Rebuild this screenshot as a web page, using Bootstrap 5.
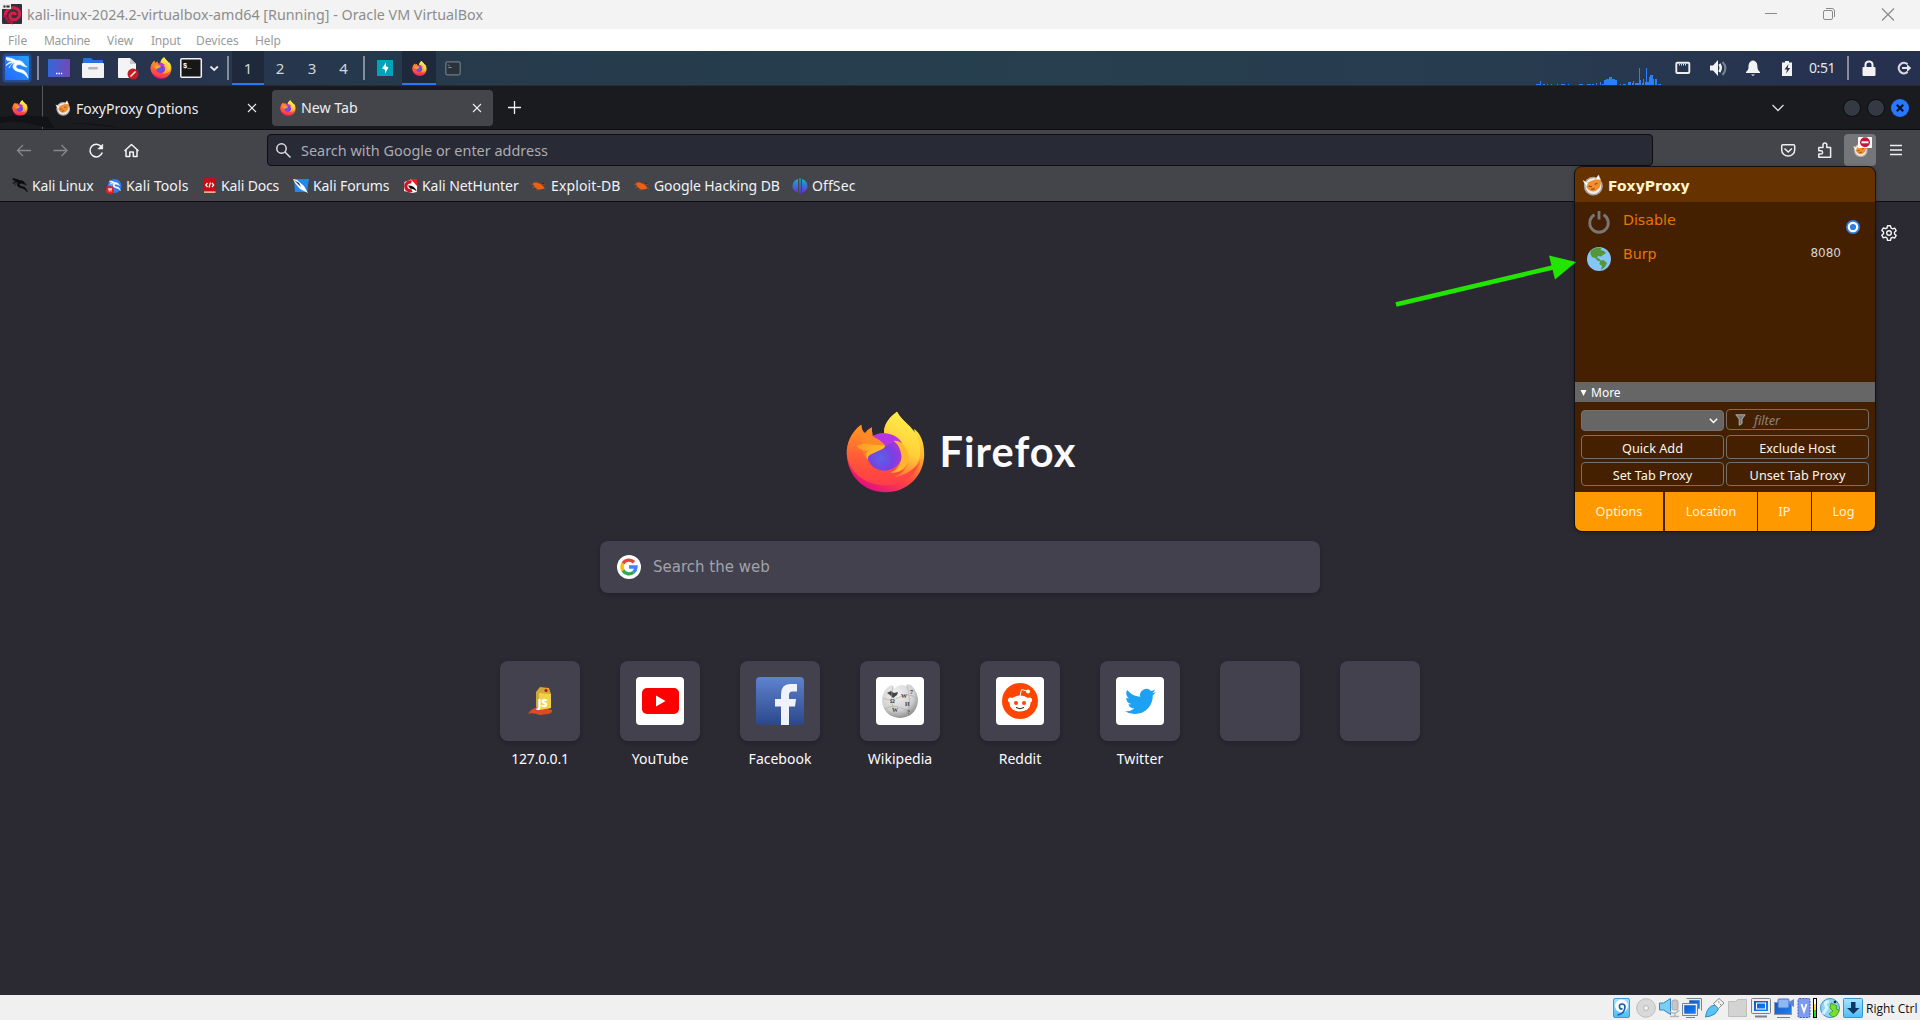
<!DOCTYPE html>
<html lang="en">
<head>
<meta charset="utf-8">
<title>kali-linux - Oracle VM VirtualBox</title>
<link rel="stylesheet" href="https://cdn.jsdelivr.net/npm/bootstrap@5.3.0/dist/css/bootstrap.min.css">
<style>
body{width:1920px;height:1020px;overflow:hidden;background:#2b2a33;font-family:"Noto Sans",sans-serif;font-size:14px;line-height:1;color:#fbfbfe}
svg{display:block;flex:none}
.cell{display:flex;align-items:center;flex:none;white-space:nowrap}
.titlebar{height:29px;background:#f3f3f3;color:#8d8d8d;font-size:14.3px}
.titlebar .cell{padding-top:1px}
.vmmenu{height:22px;background:#fff;color:#9a9a9a;font-size:12px;padding:2px 0 0 8px}
.panel{height:35px;background:linear-gradient(90deg,#27324f 0,#263a4c 450px,#263f4e 960px,#283c4f 1500px,#26314f 1850px);border-bottom:1px solid #2a2b31}
.vsep{width:2px;height:24px;background:#868d99;flex:none}
.ws{width:32px;height:34px;color:#d3d6dd;font-size:15px;justify-content:center}
.on{background:#1e2a3b;border-bottom:2px solid #2777ff;padding-top:2px}
.tabbar{height:44px;background:#1a1b1f;border-bottom:1px solid #0d0e11}
.pinned{width:43px;height:43px;border-right:1px solid #56575b;padding-left:12px}
.tabx{height:36px;border-radius:4px;color:#ececef}
.tabx.sel{background:#43454b;width:221px;margin-left:8px}
.tabx span{padding:2px 0 0 5px}
.navbarx{height:40px;background:#43454b}
.urlbar{width:1386px;height:32px;background:#282a36;border:1px solid #0e0f13;border-radius:4px;color:#abacb2;font-size:14.45px;box-sizing:border-box}
.urlbar span{padding-top:2px}
.bookmarks{height:32px;background:#43454b;border-bottom:1px solid #0e0f13;color:#f2f2f4;font-size:14px}
.foxbtn{width:32px;height:32px;background:#75767a;border-radius:4px;justify-content:center}
.newtab{height:793px;background:#2b2a33}
.word{font:700 41.5px/1 Lato,sans-serif;letter-spacing:1.050px}
.searchbox{width:720px;height:52px;border-radius:8px;background:#42414d;box-shadow:0 2px 5px rgba(0,0,0,.2);color:#a3a2aa;font:15px "DejaVu Sans",sans-serif;padding-left:17px}
.tile{width:80px;height:80px;border-radius:8px;background:#42414d;box-shadow:0 2px 5px rgba(0,0,0,.2)}
.tilebox{width:120px}
.tilename{padding-top:11px}
.pic{border-radius:4px;overflow:hidden}
.statusbar{height:25px;background:#f0f0f0;color:#111;font:12px "Open Sans",sans-serif}
.popupx{position:absolute;left:1574px;top:166px;width:302px;height:366px;border:1px solid #111216;border-radius:8px;background:#442000;overflow:hidden;box-shadow:0 1px 4px rgba(0,0,0,.3)}
.pophead{height:35px;background:#630;color:#fff3c9;font:bold 14px "DejaVu Sans",sans-serif}
.prox{font:14.2px "DejaVu Sans",sans-serif;color:#e77600;height:34px}
.morebar{height:20px;background:#666;font-size:12px;color:#fff}
.pbtn{border:1px solid #757070;border-radius:4px;height:24px;width:143px;font-size:12.7px;color:#fbf5ee;justify-content:center;padding-top:2px}
.foot{height:39px;font-size:12.6px;color:#fff3dd}
.foot>div{background:#f90;height:39px;justify-content:center;padding-top:2px}
.arrowx{position:absolute;left:1390px;top:250px}
.gear{position:absolute;left:1881px;top:225px}
</style>
<script src="https://cdn.jsdelivr.net/npm/bootstrap@5.3.0/dist/js/bootstrap.bundle.min.js"></script>
</head>
<body>
<svg width="0" height="0" class="position-absolute">
<defs>
<linearGradient id="fa" x1=".85" y1=".1" x2=".3" y2="1"><stop offset="0" stop-color="#fff04a"/><stop offset=".3" stop-color="#ffb52a"/><stop offset=".6" stop-color="#ff5038"/><stop offset="1" stop-color="#e40c80"/></linearGradient>
<linearGradient id="fb" x1="0" y1="0" x2="0" y2="1"><stop offset="0" stop-color="#ff9a1e"/><stop offset=".55" stop-color="#ff5a38"/><stop offset="1" stop-color="#ff3b47"/></linearGradient>
<linearGradient id="fc" x1=".6" y1="0" x2=".3" y2="1"><stop offset="0" stop-color="#fff14d"/><stop offset=".55" stop-color="#ffcf38"/><stop offset="1" stop-color="#ff6a33"/></linearGradient>
<radialGradient id="fd" cx=".4" cy=".65" r=".7"><stop offset="0" stop-color="#5a63e8"/><stop offset=".5" stop-color="#7a3fe0"/><stop offset="1" stop-color="#b833e1"/></radialGradient>
<linearGradient id="fe" x1="0" y1="0" x2="1" y2=".4"><stop offset="0" stop-color="#ff9620"/><stop offset="1" stop-color="#ffc02f"/></linearGradient>
<linearGradient id="kb" x1="0" y1="1" x2="1" y2="0"><stop offset="0" stop-color="#2468ff"/><stop offset="1" stop-color="#27a0ff"/></linearGradient>
<linearGradient id="dk" x1="0" x2="1"><stop offset="0" stop-color="#3268da"/><stop offset="1" stop-color="#7448b8"/></linearGradient>
<linearGradient id="fbk" x1="0" y1="0" x2="0" y2="1"><stop offset="0" stop-color="#5f83cf"/><stop offset="1" stop-color="#2b478a"/></linearGradient>
<linearGradient id="off" x1="0" y1="0" x2="0" y2="1"><stop offset="0" stop-color="#10b3c6"/><stop offset="1" stop-color="#6a2be0"/></linearGradient>
<linearGradient id="scr" x1="0" y1="0" x2="1" y2="1"><stop offset="0" stop-color="#0a55c4"/><stop offset="1" stop-color="#1f86f2"/></linearGradient>
<linearGradient id="sky" x1="0" y1="0" x2="0" y2="1"><stop offset="0" stop-color="#a6e4ff"/><stop offset="1" stop-color="#4dbcf5"/></linearGradient>
<radialGradient id="glb" cx=".4" cy=".3" r=".8"><stop offset="0" stop-color="#f4f4f4"/><stop offset=".6" stop-color="#d0d0d0"/><stop offset="1" stop-color="#777"/></radialGradient>
</defs>
<symbol id="firefox" viewBox="15 16 242 250">
<path d="M62 58C30 82 17 115 18 148C20 215 72 264 136 264C202 264 254 214 254 148C254 110 243 85 223 70L226 88C210 58 186 45 171 18C138 42 130 66 132 84L96 92L94 66C86 70 78 77 74 84C67 80 62 70 62 58Z" fill="url(#fa)"/>
<path d="M62 58C30 82 17 115 18 148C24 205 75 240 130 243C185 244 232 215 244 160C235 195 200 205 165 200L96 185L82 150L96 92L94 66C86 70 78 77 74 84C67 80 62 70 62 58Z" fill="url(#fb)"/>
<path d="M171 18C138 42 128 68 133 88C165 92 200 120 204 160C206 185 190 208 160 218C215 212 240 175 242 145C243 115 232 90 223 78C208 55 184 44 171 18Z" fill="url(#fc)"/>
<circle cx="133" cy="143" r="55" fill="url(#fd)"/>
<path d="M96 94C110 82 128 80 148 86C170 92 184 105 187 117C178 108 168 106 160 107C150 130 110 130 96 94Z" fill="#b636e2"/>
<path d="M160 107C180 104 200 122 206 150C210 182 186 206 152 204C176 194 188 170 184 148C180 128 172 116 160 107Z" fill="#ffb52d"/>
<path d="M74 84C80 76 88 69 94 66L96 92C106 99 126 106 135 122C116 126 100 120 70 122C58 108 64 92 74 84Z" fill="#ff8927"/>
<path d="M70 120L84 137C77 142 76 152 83 165C74 158 66 146 66 130Z" fill="#ff7b2c"/>
<path d="M48 123C65 114 82 115 96 119L135 121C134 132 118 135 108 140C92 148 80 150 83 165C73 150 77 140 84 137C70 139 55 134 48 123Z" fill="url(#fe)"/>
</symbol>
<symbol id="foxy" viewBox="0 0 20 20">
<circle cx="10.300" cy="11" r="8.600" fill="#a9adb2"/><circle cx="10.300" cy="11" r="7.600" fill="#f4ece4" stroke="#9a8f86" stroke-width=".6"/>
<path d="M1 6L5 8Q9 6 12.500 5L15 1L17 5Q17.500 11 15 13.500Q11.500 17 8 15.500Q4.500 14 4 11Z" fill="#f08f30"/>
<path d="M1 6L5.500 8.200L4 11.500ZM12.500 4.800L15 .8L16.800 5.200Z" fill="#fff" stroke="#c9c9c9" stroke-width=".4"/>
<path d="M6 11l3 .6M11.500 9.300l2.500-.6M8.500 14l3-.6" stroke="#8d4410" stroke-width="1"/>
</symbol>
<symbol id="dragon" viewBox="0 0 24 24">
<path d="M1 1.500C6 2 9 3 11 4.500C15 4 18 5.500 19.500 9L22 11L18 10C16 8.500 13.500 8 12 9C9.500 11 12 13 15 13.500C19 14 22 16 23 22C20 17.500 17 16.500 13 15.500C7 14 6.500 9 10.500 6.800C7 6 4 7.500 1 9.500C3 6.500 5 5.500 8 5.200C6 4 3.500 3.500 1 3.500" fill="currentColor" stroke="currentColor" stroke-width=".6"/>
<path d="M2 4.500C5 4 7 4.500 9 5.500M4 12C6 8 8 7 10 6.500" stroke="currentColor" fill="none" stroke-width=".9"/>
</symbol>
<symbol id="bug" viewBox="0 0 16 10"><path d="M2 1.500L6 1.200L8 2L10 2.500L13 5L14 8L11 8.500L8 9L5 7L3 5Z" fill="#ee5f12"/><path d="M0 3L4 4M1 7L5 5.500M5 0L7 2M11 1.500L12 3.500L15.500 3M13 6L16 8.500M7 8L6 10" stroke="#ee5f12" stroke-width=".7" opacity=".7"/></symbol>
<symbol id="xx" viewBox="0 0 10 10"><path d="M1 1l8 8M9 1l-8 8" stroke="currentColor" stroke-width="1.100"/></symbol>
</svg>

<header class="titlebar d-flex align-items-center">
<svg width="27" height="29" viewBox="0 0 27 29"><rect x="2" y="4" width="20" height="20" rx="1" fill="#30323b"/><path d="M5 17C5 10 10 7 15 8C20 9 21 15 18 18C15 21 10 20 10 16C10 12.500 15 12 15.500 15" fill="none" stroke="#d81f49" stroke-width="3"/><path d="M5.500 15C5.500 19 9 22.500 13 23" fill="none" stroke="#a8173c" stroke-width="3"/><path d="M2 4h9v5H2z" fill="#e9e9e9"/><path d="M3.500 6.500h2M6.500 6.500h3" stroke="#222" stroke-width="1.800"/></svg>
<div class="cell">kali-linux-2024.2-virtualbox-amd64 [Running] - Oracle VM VirtualBox</div>
<svg class="ms-auto" width="155" height="29" viewBox="1765 0 155 29" fill="none" stroke="#8a8a8a"><path d="M1765 13.500h12"/><rect x="1823.500" y="10.500" width="9" height="9" rx="1.500"/><path d="M1826 8.500h6q2.500 0 2.500 2.500v6"/><path d="M1882 8.500l12 12M1894 8.500l-12 12" stroke-width="1.200"/></svg>
</header>

<nav class="vmmenu d-flex align-items-center">
<div class="cell" style="width:36px">File</div><div class="cell" style="width:63px;letter-spacing:-.3px">Machine</div><div class="cell" style="width:44px">View</div><div class="cell" style="width:45px;letter-spacing:-.2px">Input</div><div class="cell" style="width:59px">Devices</div><div class="cell" style="letter-spacing:-.1px">Help</div>
</nav>

<div class="panel d-flex align-items-center">
<div class="cell" style="width:37px"><svg width="37" height="34" viewBox="0 0 37 34"><rect x="2.500" y="2.500" width="29" height="29" rx="4" fill="#2878ff" opacity=".35"/><rect x="5" y="5" width="24" height="24" rx="1.500" fill="url(#kb)"/><svg x="5" y="5" width="24" height="24" color="#fff"><use href="#dragon"/></svg></svg></div>
<div class="vsep"></div>
<div class="cell" style="width:188px"><svg width="188" height="34" viewBox="39 51 188 34">
<rect x="48" y="59" width="22" height="18" rx="1" fill="url(#dk)"/><path d="M56 73.500h1.500M58.500 73.500h1.500M61 73.500h1.200" stroke="#fff" stroke-width="1.300"/>
<path d="M83 59q0-1 1-1h7l2 2h9q1 0 1 1v3H83z" fill="#2c6fe0"/><rect x="82" y="63" width="22" height="15" rx="1" fill="#f3f3f3"/><rect x="88" y="67" width="10" height="2.500" rx="1.200" fill="#b6b6b6"/>
<path d="M119 58h11l6 6v14h-17q-1 0-1-1V59q0-1 1-1z" fill="#f4f4f4"/><path d="M130 58l6 6h-6z" fill="#c9c9c9"/><circle cx="133" cy="74" r="5.500" fill="#cc1a22"/><path d="M130.500 76.500l5-5" stroke="#fff" stroke-width="1.500"/>
<svg x="150" y="57" width="22" height="22"><use href="#firefox"/></svg>
<rect x="180.800" y="58.800" width="20.500" height="18.500" rx="1" fill="#171717" stroke="#f1f1f1" stroke-width="1.500"/><text x="183" y="68" font-family="Liberation Mono,monospace" font-size="7" font-weight="700" fill="#fff">$_</text>
<path d="M210.500 66.500l3.700 3.500 3.700-3.500" fill="none" stroke="#e6e8ec" stroke-width="1.800"/></svg></div>
<div class="vsep"></div>
<div class="cell ws on" style="margin-left:3px">1</div><div class="cell ws">2</div><div class="cell ws">3</div><div class="cell ws" style="width:35px;padding-right:4px">4</div>
<div class="vsep"></div>
<div class="cell" style="width:37px;padding-left:12px"><svg width="16" height="16" viewBox="0 0 16 16"><path d="M0 0h16v16H0z" fill="#01a3b8"/><path d="M9 2.500V6.300L11.500 7.500L8 13.500V9.700L5 8.500Z" fill="#fff"/></svg></div>
<div class="cell on justify-content-center" style="width:34px;height:34px"><svg width="15" height="15"><use href="#firefox"/></svg></div>
<div class="cell" style="padding-left:9px"><svg width="16" height="15" viewBox="0 0 16 15"><rect x=".8" y=".8" width="14.400" height="13" rx="1.500" fill="#2a333c" stroke="#6f7a83" stroke-width="1.200"/><path d="M3 3.500l1.500 1.500M3.500 6.500h3" stroke="#8d959c"/></svg></div>
<svg class="ms-auto" width="138" height="34" viewBox="1535 51 138 34" shape-rendering="crispEdges"><path fill="#2a7fff" d="M1536 84h5v1h-5zM1540 81h1v4h-1zM1543 84h2v1h-2zM1547 84h1v1h-1zM1551 84h1v1h-1zM1557 84h1v1h-1zM1561 84h4v1h-4zM1568 84h1v1h-1zM1579 84h4v1h-4zM1587 84h4v1h-4zM1592 84h2v1h-2zM1596 83h1v2h-1zM1600 82h1v3h-1zM1602 84h2v1h-2zM1604 80h2v5h-2zM1606 79h3v6h-3zM1609 77h3v8h-3zM1612 79h3v6h-3zM1615 80h2v5h-2zM1620 84h1v1h-1zM1623 84h3v1h-3zM1628 82h3v3h-3zM1632 83h1v2h-1zM1633 81h1v4h-1zM1635 83h4v2h-4zM1639 68h1v17h-1zM1640 80h1v5h-1zM1642 83h2v2h-2zM1643 79h1v6h-1zM1646 68h1v17h-1zM1645 82h4v3h-4zM1649 77h1v8h-1zM1650 75h3v10h-3zM1653 79h1v6h-1zM1655 79h2v6h-2zM1658 84h3v1h-3z"/></svg>
<div class="cell" style="width:135px"><svg width="135" height="34" viewBox="1673 51 135 34"><rect x="1676.300" y="62.800" width="13" height="10.200" rx="1" fill="none" stroke="#eee" stroke-width="1.900"/><path d="M1679.500 64v1.500M1681.500 64v1.500M1683.500 64v1.500M1685.500 64v1.500" stroke="#eee" stroke-width=".9"/>
<path d="M1710 65.500h3l5-5.500v16l-5-5.500h-3z" fill="#f2f2f2"/><path d="M1719.500 64q2.500 4-.2 8" stroke="#f2f2f2" stroke-width="2.500" fill="none"/><path d="M1722.500 62q6 6 0 13" stroke="#7c8492" stroke-width="2" fill="none"/>
<path d="M1753 60.500c-4 .5-4.500 4-4.500 7 0 2-1 3-2.500 4.500v1h14v-1c-1.500-1.500-2.500-2.500-2.500-4.500 0-3-.5-6.500-4.500-7z" fill="#f2f2f2"/><path d="M1751 74.500h4l-2 1.500z" fill="#f2f2f2"/>
<path d="M1785 61h4v1.500h3V76h-10V62.500h3z" fill="#f2f2f2"/><path d="M1788.500 64l-4 5.500h2.500l-.8 4 4-5.500h-2.500z" fill="#26314f"/></svg></div>
<div class="cell" style="width:40px;font-size:14px;letter-spacing:-.4px;color:#e3e6ee;padding-left:1px">0:51</div><div class="vsep" style="margin-left:-1px"></div>
<svg width="71" height="34" viewBox="1849 51 71 34"><rect x="1862.500" y="67" width="13" height="9" rx="1" fill="#f2f2f2"/><path d="M1865.500 68v-3.500a3.500 3 0 0 1 7 0V68" fill="none" stroke="#f2f2f2" stroke-width="2"/><path d="M1907.500 64.300a5.200 5.200 0 1 0 0 7.600" fill="none" stroke="#d9dade" stroke-width="2.200"/><path d="M1902 67h5v-2.800l4.200 3.900-4.200 3.900V69h-5z" fill="#e5e6ea"/></svg>
</div>

<div class="tabbar d-flex align-items-center position-relative">
<svg class="position-absolute start-0 bottom-0" width="130" height="14" viewBox="0 0 130 14"><path d="M0 2Q25-1 48 2L54 13H46Q20 4 0 8ZM70 8Q100 8 122 13Q95 10 70 8Z" fill="#121316"/></svg>
<div class="cell pinned"><svg width="16" height="16"><use href="#firefox"/></svg></div>
<div class="cell tabx" style="width:221px;padding-left:12px"><svg width="16" height="16"><use href="#foxy"/></svg><span style="width:176px">FoxyProxy Options</span><svg width="10" height="10"><use href="#xx"/></svg></div>
<div class="cell tabx sel" style="padding-left:8px"><svg width="16" height="16"><use href="#firefox"/></svg><span style="width:176px;font-size:14.200px">New Tab</span><svg width="10" height="10"><use href="#xx"/></svg></div>
<svg style="margin-left:15px" width="13" height="13" viewBox="0 0 13 13"><path d="M6.500 0v13M0 6.500h13" stroke="#f0f0f0" stroke-width="1.300"/></svg>
<svg class="ms-auto" width="150" height="43" viewBox="1770 86 150 43"><path d="M1772.500 105l5.500 5.500 5.500-5.500" fill="none" stroke="#ddd" stroke-width="1.300"/><g fill="#343944" stroke="#0b0c0f"><circle cx="1852" cy="108" r="8.500"/><circle cx="1876" cy="108" r="8.500"/></g><circle cx="1900" cy="108" r="9" fill="#2777ff"/><path d="M1896.800 104.800l6.400 6.400M1903.200 104.800l-6.400 6.400" stroke="#08122a" stroke-width="2.200"/></svg>
</div>

<div class="navbarx d-flex align-items-center">
<svg width="267" height="40" viewBox="0 130 267 40" fill="none" stroke="#f4f4f5" stroke-width="1.500"><g stroke="#87888c" stroke-width="1.300"><path d="M17.500 150.500H31M23 145l-5.500 5.500 5.500 5.500M53.500 150.500H67M61.500 145l5.500 5.500-5.500 5.500"/></g><path d="M101.500 147a6.300 6.300 0 1 0 .8 5.500"/><path d="M102.800 144v5h-5z" fill="#f4f4f5" stroke-width=".5"/><path d="M124.500 151l7-6.500 7 6.500M126 150v6.500h3.800v-4.500h3.500v4.500h3.700V150" stroke-linejoin="round"/></svg>
<div class="cell urlbar"><svg width="33" height="20" viewBox="0 0 33 20" fill="none" stroke="#e0e0e4" stroke-width="1.500"><circle cx="13.500" cy="8.500" r="4.700"/><path d="M17 12l5.500 5.500"/></svg><span>Search with Google or enter address</span></div>
<svg class="ms-auto" width="191" height="40" viewBox="1653 130 191 40" fill="none" stroke="#eeeef0" stroke-width="1.500"><path d="M1783 144.800h10.500q1.200 0 1.200 1.200v4a6.500 6 0 0 1-13 0v-4q0-1.200 1.300-1.200zM1784.500 148.500l3.700 3.500 3.700-3.500"/><path d="M1818.800 147.500h4.200v-2.700a1.900 1.900 0 0 1 3.800 0v2.700h3.800v9.800h-11.800v-3.300h2.200a1.600 1.600 0 0 0 0-3.200h-2.200z" stroke-linejoin="round"/></svg>
<div class="cell foxbtn"><svg width="32" height="32" viewBox="0 0 32 32"><svg x="8.500" y="7.500" width="16" height="16"><use href="#foxy"/></svg><rect x="14" y="3" width="14" height="11" rx="1" fill="#fff"/><circle cx="21" cy="8.300" r="5" fill="#c8153a"/><path d="M17.500 8.300h7" stroke="#fff" stroke-width="2"/></svg></div>
<svg width="44" height="40" viewBox="1876 130 44 40"><path d="M1890 145.500h12M1890 150h12M1890 154.500h12" stroke="#f0f0f2" stroke-width="1.300"/></svg>
</div>

<div class="bookmarks d-flex align-items-center">
<div class="cell" style="width:106px;padding-left:12px;letter-spacing:-.15px"><svg width="20" height="18" viewBox="0 0 20 18" color="#08090b"><svg width="16" height="17"><use href="#dragon"/></svg></svg>Kali Linux</div>
<div class="cell" style="width:97px;letter-spacing:.1px"><svg width="20" height="16" viewBox="0 0 20 16"><circle cx="8.500" cy="8" r="7" fill="#2e7cf0"/><svg x="3" y="2" width="12" height="12" color="#fff"><use href="#dragon"/></svg><circle cx="4" cy="12" r="4" fill="#e12127"/><path d="M2 11h4M3.200 10.500v3M5 10.500v3" stroke="#fff" stroke-width=".9"/></svg>Kali Tools</div>
<div class="cell" style="width:90px;letter-spacing:-.15px"><svg width="18" height="16" viewBox="0 0 18 16"><rect x=".5" width="12" height="16" rx="1" fill="#c50f14"/><path d="M1 13.500h11.500v1.200H1z" fill="#eee"/><path d="M4.500 5L2.800 7l1.700 2M9 5l1.700 2L9 9M7.500 4.500l-1.500 5" stroke="#fff" fill="none" stroke-width="1.200"/></svg>Kali Docs</div>
<div class="cell" style="width:109px;letter-spacing:-.08px"><svg width="20" height="16" viewBox="0 0 20 16"><path d="M1 1h15l-2 13H2z" fill="#2386f5"/><path d="M0 1L4 2L11 8L15 15L7 11L2 5Z" fill="#fff"/><path d="M1 2L6 5L8 9Z" fill="#222"/></svg>Kali Forums</div>
<div class="cell" style="width:129px;letter-spacing:-.05px"><svg width="20" height="16" viewBox="0 0 20 16"><path d="M8 1L15 1L16 10Z" fill="#e31e26"/><path d="M2.500 4L9 1.500 15 8v6l-5 1L2 13z" fill="#fff"/><path d="M9.500 4A4.500 4.500 0 1 0 10 12.500" fill="none" stroke="#cf1522" stroke-width="3.200"/><path d="M6 7.500q6-1 9 6-4-3-7-3z" fill="#111"/></svg>Kali NetHunter</div>
<div class="cell" style="width:103px;letter-spacing:.12px"><svg width="20" height="12" viewBox="0 0 20 12"><svg y="1" width="15" height="10"><use href="#bug"/></svg></svg>Exploit-DB</div>
<div class="cell" style="width:158px;letter-spacing:-.08px"><svg width="20" height="12" viewBox="0 0 20 12"><svg y="1" width="15" height="10"><use href="#bug"/></svg></svg>Google Hacking DB</div>
<div class="cell" style="letter-spacing:.1px"><svg width="20" height="16" viewBox="0 0 20 16" fill="url(#off)"><path d="M6 1v14Q0 12 .5 7.500 1 2.500 6 1zM10 1v14q6-3 5.500-7.500Q15 2.500 10 1z"/><path d="M7.300.5h1.500V16H7.300z"/></svg>OffSec</div>
</div>

<main class="newtab d-flex flex-column align-items-center">
<div class="d-flex" style="margin-top:209px;width:229px"><svg style="margin-left:-1px" width="81" height="82"><use href="#firefox"/></svg><span class="word" style="padding:20px 0 0 14px">Firefox</span></div>
<div class="cell searchbox" style="margin-top:48px"><svg width="36" height="24" viewBox="0 0 36 24" fill="none" stroke-width="3.400"><circle cx="12" cy="12" r="12" fill="#fff"/><path d="M17 7.200A7 7 0 0 0 6 8.500" stroke="#ea4335"/><path d="M6 8.500a7 7 0 0 0 0 7" stroke="#fbbc05"/><path d="M6 15.500a7 7 0 0 0 10.500 1.700" stroke="#34a853"/><path d="M16.500 17.200A7 7 0 0 0 19 12h-7" stroke="#4285f4"/></svg>Search the web</div>
<div class="d-flex text-center" style="margin-top:68px">
<div class="tilebox d-flex flex-column align-items-center"><div class="cell tile justify-content-center"><svg width="48" height="48" viewBox="0 0 48 48"><path d="M12 37Q15 31 23 30L36 33Q37 36 32 37L24 38Q16 35 12 37Z" fill="#dd4b25"/><path d="M20 15L24 10L33 11L35 17V31L23 33L20 30Z" fill="#d0a936"/><path d="M23 16L35 17V31L23 33Z" fill="#f1d04c"/><circle cx="30" cy="13.500" r="1.500" fill="#c11"/><text x="21.500" y="29.500" font-family="Open Sans,sans-serif" font-size="11" font-weight="800" fill="#fff">JS</text></svg></div><div class="tilename" style="letter-spacing:-.2px">127.0.0.1</div></div>
<div class="tilebox d-flex flex-column align-items-center"><div class="cell tile justify-content-center"><svg class="pic" width="48" height="48"><path d="M0 0h48v48H0z" fill="#fff"/><rect x="6" y="11" width="37" height="26" rx="5" fill="#f00"/><path d="M20 18.500v11l9.500-5.500z" fill="#fff"/></svg></div><div class="tilename">YouTube</div></div>
<div class="tilebox d-flex flex-column align-items-center"><div class="cell tile justify-content-center"><svg class="pic" width="48" height="48"><path d="M0 0h48v48H0z" fill="url(#fbk)"/><path d="M25 48V29.500H19V22h6v-4.500Q25 7 34 7h7v7.500h-5Q33 14.500 33 18v4h7l-1 7.500h-6V48z" fill="#eff2fa"/></svg></div><div class="tilename">Facebook</div></div>
<div class="tilebox d-flex flex-column align-items-center"><div class="cell tile justify-content-center"><svg class="pic" width="48" height="48"><path d="M0 0h48v48H0z" fill="#fff"/><path d="M12 10L16 8L18 12L22 9L26 8L30 9L31 7L35 8Q42 15 42 24Q40 40 24 41Q8 40 6 24Q6 15 12 10Z" fill="url(#glb)"/><path d="M11 16l4-2 3 2 4-1-1 3-4 3-3-3z" fill="#444"/><path d="M7 21q8 4 17-1t18 2M9 32q8-5 16-1t15 0M17 9q-4 14 3 31M31 9q5 15 0 30" fill="none" stroke="#aaa" stroke-width=".6"/><g font-family="Liberation Serif,serif" font-size="6" font-weight="700" fill="#444"><text x="14" y="26">Ω</text><text x="25" y="21">W</text><text x="29" y="29">И</text><text x="16" y="35">W</text><text x="34" y="17">7</text><text x="31" y="37">?</text></g></svg></div><div class="tilename">Wikipedia</div></div>
<div class="tilebox d-flex flex-column align-items-center"><div class="cell tile justify-content-center"><svg class="pic" width="48" height="48"><path d="M0 0h48v48H0z" fill="#fff"/><circle cx="24" cy="24" r="18" fill="#ff4500"/><ellipse cx="24" cy="26.500" rx="10.500" ry="8" fill="#fff"/><circle cx="14.500" cy="23" r="2.600" fill="#fff"/><circle cx="33.500" cy="23" r="2.600" fill="#fff"/><circle cx="32" cy="14.500" r="2" fill="#fff"/><path d="M24 19l1.500-6.500 6 1.600" fill="none" stroke="#fff"/><circle cx="20" cy="26" r="2" fill="#ff4500"/><circle cx="28" cy="26" r="2" fill="#ff4500"/><path d="M20 30.500q4 2.500 8 0" fill="none" stroke="#222"/></svg></div><div class="tilename">Reddit</div></div>
<div class="tilebox d-flex flex-column align-items-center"><div class="cell tile justify-content-center"><svg class="pic" width="48" height="48"><path d="M0 0h48v48H0z" fill="#fff"/><g transform="translate(9 9) scale(1.290)"><path d="M23.950 4.570a10 10 0 0 1-2.820.77 4.960 4.960 0 0 0 2.160-2.720c-.95.550-2 .95-3.130 1.180a4.920 4.920 0 0 0-8.380 4.480C7.690 8.090 4.070 6.130 1.640 3.160a4.820 4.820 0 0 0-.67 2.480c0 1.710.87 3.210 2.190 4.100a4.900 4.900 0 0 1-2.230-.62v.06a4.920 4.920 0 0 0 3.950 4.830 5 5 0 0 1-2.210.08 4.940 4.940 0 0 0 4.600 3.420A9.870 9.870 0 0 1 0 19.540a13.990 13.990 0 0 0 7.550 2.210c9.050 0 14-7.500 14-13.980 0-.21 0-.42-.02-.63a9.940 9.940 0 0 0 2.460-2.550z" fill="#1da1f2"/></g></svg></div><div class="tilename" style="letter-spacing:.1px">Twitter</div></div>
<div class="tilebox d-flex justify-content-center"><div class="tile"></div></div>
<div class="tilebox d-flex justify-content-center"><div class="tile"></div></div>
</div>
</main>

<footer class="statusbar d-flex align-items-center justify-content-end">
<svg width="257" height="25" viewBox="1610 995 257 25">
<rect x="1613.500" y="998.500" width="16" height="19" rx="1.500" fill="url(#sky)" stroke="#3d9bd8"/><circle cx="1621.500" cy="1006" r="6.500" fill="#fff"/><path d="M1617.500 1015q7-1 7.500-8 0-3-3-3t-2.500 3 3 1.500" fill="none" stroke="#1d5dab" stroke-width="1.700"/>
<circle cx="1646" cy="1008" r="9.300" fill="#d9d9d9" stroke="#bdbdbd"/><circle cx="1646" cy="1008" r="2.500" fill="#f3f3f3" stroke="#b5b5b5"/>
<path d="M1659.500 1003h4l7-4.500v16l-7-4.500h-4z" fill="#7ccdf6" stroke="#2f87c5"/><rect x="1672" y="1000" width="6" height="10" rx="2" fill="#c6c6c6" stroke="#aaa"/><path d="M1669 1011q6 5 10-1M1675 1013v3.500M1670 1016.500h9" fill="none" stroke="#b5b5b5" stroke-width="1.500"/>
<g fill="url(#scr)" stroke="#eee" stroke-width="1.500"><rect x="1688.500" y="999.500" width="12" height="10"/><rect x="1683.500" y="1004.500" width="13" height="10"/></g><path d="M1686.500 998.500h15v12M1682.500 1003.500h15v12h-15zM1686 1017.500h9" fill="none" stroke="#728496"/>
<path d="M1705.500 1017q1-8 6-11l4-1 3 4q-3 6-8 7z" fill="#5ac5f5" stroke="#2c8bc7"/><path d="M1713.500 1003.500l5.500-5 5 4.500-5.500 5.500z" fill="#f4f4f4" stroke="#888"/><path d="M1718 1001.500l1.500 1.200M1720 1004l1.200 1" stroke="#777"/>
<path d="M1728.500 1001.500h7l2-2h9v17h-18z" fill="#d3d3d3" stroke="#bdbdbd"/>
<rect x="1751.500" y="998.500" width="19" height="15" rx="1" fill="#eee" stroke="#78818c"/><rect x="1754" y="1001" width="14" height="10" fill="url(#scr)"/><rect x="1756.500" y="1003" width="9" height="6" fill="none" stroke="#fff"/><path d="M1755 1016.500h12" stroke="#78818c" stroke-width="2"/>
<rect x="1774.500" y="1002.500" width="17" height="12" fill="url(#scr)" stroke="#8c98a8"/><rect x="1778" y="999" width="11" height="9" rx="1" fill="#8db8f4" stroke="#4b6ec5"/><path d="M1789 1002l5-3v8l-5-3z" fill="#5c84dc"/><path d="M1777 1017.500h13" stroke="#78818c"/>
<rect x="1798" y="998.500" width="12" height="19" rx="1.500" fill="#7d9bf0" stroke="#435bbd" stroke-dasharray="2 1"/><path d="M1801.500 1004l2.500 7.500 2.500-7.500" fill="none" stroke="#fff" stroke-width="1.800"/>
<rect x="1813.500" y="998.500" width="3" height="19" fill="#fff" stroke="#000"/><path d="M1814 1010h2v7h-2z" fill="#1ee51a"/><path d="M1814 1004h2v6h-2z" fill="#fd2"/>
<circle cx="1830" cy="1008" r="9.500" fill="#8fd4f4" stroke="#3b93c7"/><path d="M1823 1014l4-6q-4-7 2-6" fill="none" stroke="#d5f3ff" stroke-width="3"/><path d="M1831 1003l6 3-1 3 3 1q-1 6-6 7l-4-3 4-3-3-3z" fill="#7be02d" stroke="#47a51a"/><circle cx="1835" cy="1002" r="1.300" fill="#123"/>
<rect x="1843.500" y="998.500" width="19" height="19" rx="1" fill="url(#sky)" stroke="#3795cf"/><path d="M1851 1002h4.500v6h4l-6.200 6-6.300-6h4z" fill="#0d3666"/></svg>
<div class="cell" style="width:54px;padding-top:2px;margin-left:-1px">Right Ctrl</div>
</footer>

<svg class="gear" width="16" height="16" viewBox="0 0 16 16" fill="none" stroke="#f4f4f6" stroke-width="1.400"><path d="M6.500.8h3l.5 2.200 1.500.9 2.200-.7 1.500 2.600-1.700 1.500v1.600l1.700 1.500-1.500 2.600-2.200-.7-1.500.9-.5 2.200h-3L6 13l-1.500-.9-2.200.7L.8 10.200l1.700-1.500V7.100L.8 5.600 2.300 3l2.200.7L6 3z" stroke-linejoin="round"/><circle cx="8" cy="8" r="2.300"/></svg>

<aside class="popupx">
<div class="pophead cell"><svg style="margin-left:7px" width="22" height="22"><use href="#foxy"/></svg><span style="padding:3px 0 0 4px">FoxyProxy</span></div>
<div class="prox d-flex"><svg style="margin:8px 0 0 12px" width="36" height="26" viewBox="0 0 36 26" fill="none" stroke="#777" stroke-width="2.800"><path d="M7.500 4.800A9.300 9.300 0 1 0 16.500 4.800M12 1v8.500"/></svg><span style="padding-top:10px">Disable</span><svg class="ms-auto" style="margin:18px 15px 0 0" width="14" height="14"><circle cx="7" cy="7" r="7" fill="#2f7de1"/><circle cx="7" cy="7" r="4.200" fill="#2f7de1" stroke="#fff" stroke-width="2.200"/></svg></div>
<div class="prox d-flex" style="height:146px"><svg style="margin:11px 0 0 12px" width="36" height="24" viewBox="0 0 36 24"><circle cx="12" cy="12" r="12" fill="#85c5f7"/><path d="M3.500 4Q9-1 14.500 1L13.500 3L17 4L19 6L16 8L14 9.500L11 9L10 10.500L12.500 12L14 14L11 14L8 11L5 10L3.500 7ZM13 14L16.500 13L20 16L18 20L14 23L15 19L12.500 17Z" fill="#559637"/></svg><span style="padding-top:10px">Burp</span><span class="ms-auto" style="padding:10px 34px 0 0;font-size:12px;color:#d8d3cd">8080</span></div>
<div class="cell morebar"><svg style="margin:1px 4px 0 5px" width="7" height="8"><path d="M.5 1h6L3.500 7z" fill="#fff"/></svg><span style="padding-top:2px">More</span></div>
<div class="d-flex" style="padding:7px 0 0 6px;gap:2px"><div class="pbtn cell" style="height:21px;background:#666;margin-top:1px;padding-top:0"><svg style="margin:0 5px 0 auto" width="9" height="6"><path d="M.8.8l3.700 3.700L8.200.8" stroke="#fff" stroke-width="1.500" fill="none"/></svg></div><div class="pbtn cell fst-italic justify-content-start" style="height:21px;color:#8f8379"><svg style="margin:-2px 8px 0 8px" width="11" height="12"><path d="M.8.800h9.400L7 5v4.500L4.200 11.300V5z" fill="#777" stroke="#aaa"/></svg><span>filter</span></div></div>
<div class="d-flex" style="padding:4px 0 0 6px;gap:2px"><div class="pbtn cell">Quick Add</div><div class="pbtn cell">Exclude Host</div></div>
<div class="d-flex" style="padding:3px 0 6px 6px;gap:2px"><div class="pbtn cell">Set Tab Proxy</div><div class="pbtn cell">Unset Tab Proxy</div></div>
<div class="foot d-flex" style="gap:1px"><div class="cell" style="width:88px;margin-right:1px">Options</div><div class="cell" style="width:92px">Location</div><div class="cell" style="width:53px">IP</div><div class="cell" style="width:63px">Log</div></div>
</aside>

<svg class="arrowx" width="190" height="60" viewBox="1390 250 190 60"><path d="M1396 304.500L1555 267" stroke="#23e600" stroke-width="4.500"/><path d="M1549 255.500L1576 262L1555 279.500Z" fill="#23e600"/></svg>
</body>
</html>
